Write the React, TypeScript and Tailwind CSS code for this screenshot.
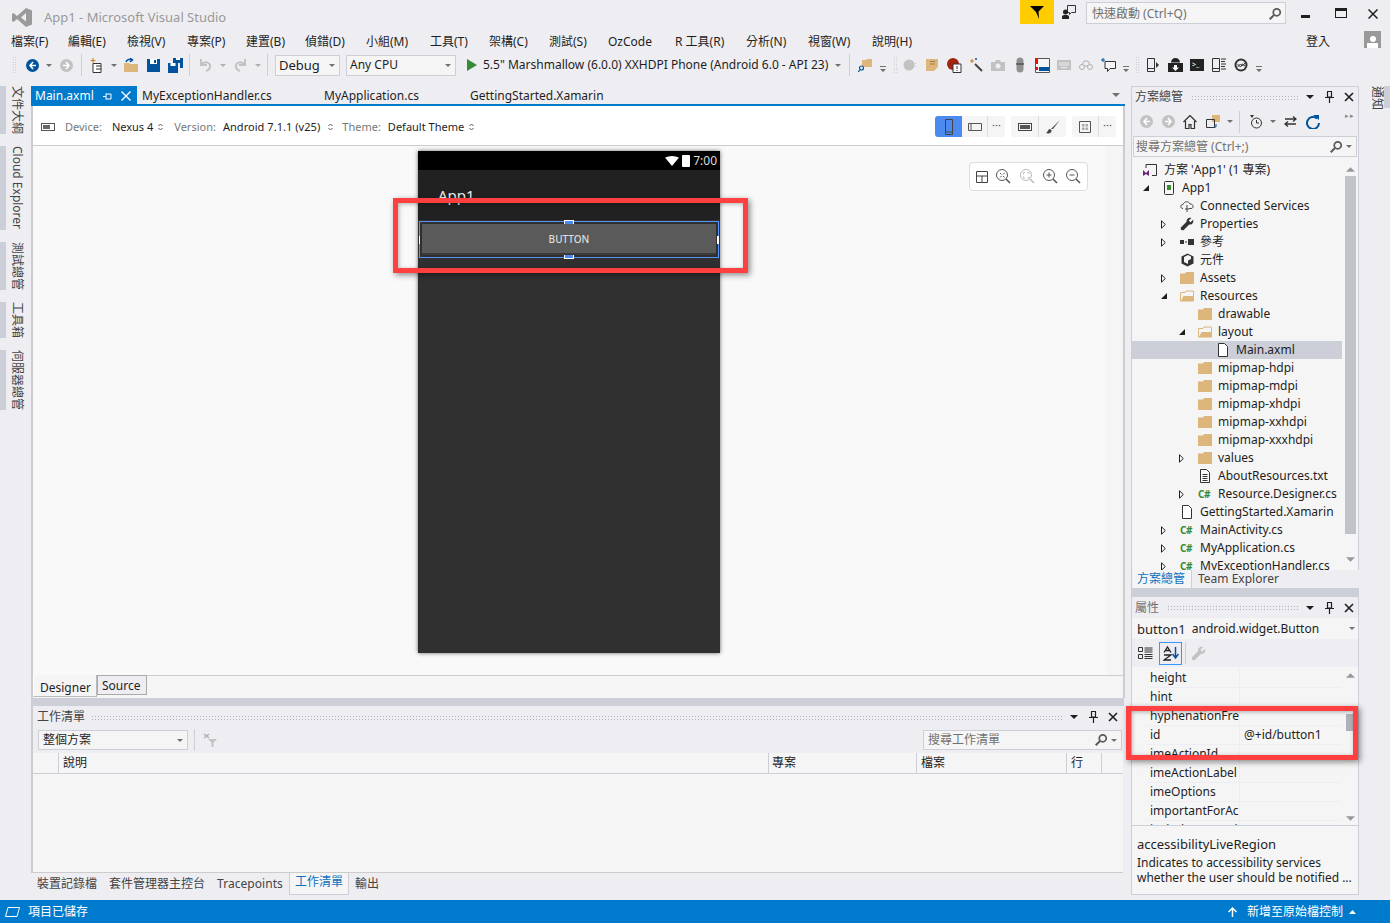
import React from "react";

type P = { c?: string; v?: string; children?: React.ReactNode };
const S = ({ c = "", v = "0 0 16 16", children }: P) => (
  <svg viewBox={v} className={"shrink-0 " + c} fill="none">{children}</svg>
);
const Caret = ({ c = "", f = "#717171" }: { c?: string; f?: string }) => (
  <S c={"w-[6px] h-[3px] " + c} v="0 0 6 3"><path d="M0 0h6L3 3z" fill={f} /></S>
);
const CaretBar = ({ c = "" }: { c?: string }) => (
  <S c={"w-[6px] h-[6px] mt-[8px] " + c} v="0 0 6 6"><path d="M0 0h6v1H0zM0 3h6L3 6z" fill="#717171" /></S>
);
const Grip = ({ c = "" }: { c?: string }) => (
  <div className={"w-[5px] h-[18px] bg-[radial-gradient(#b5b5be_0.6px,transparent_0.8px)] bg-[length:2.500px_2.500px] " + c} />
);
const Dots = ({ c = "" }: { c?: string }) => (
  <div className={"h-[5px] bg-[radial-gradient(#b0b0ba_0.7px,transparent_0.8px)] bg-[length:3px_3px] " + c} />
);
const Sep = ({ c = "" }: { c?: string }) => <div className={"w-px h-[22px] bg-[#ccced8] " + c} />;
const Circ = ({ c = "", f, dir }: { c?: string; f: string; dir: "l" | "r" }) => (
  <S c={"w-[13px] h-[13px] " + c} v="0 0 13 13">
    <circle cx="6.5" cy="6.5" r="6.5" fill={f} />
    <path d={dir === "l" ? "M7 3 4 6.5 7 10M4 6.5h6" : "M6 3l3 3.5L6 10M9 6.5H3"} stroke="#fff" strokeWidth="1.6" />
  </S>
);
const Mag = ({ c = "" }: { c?: string }) => (
  <S c={"w-[14px] h-[14px] " + c}>
    <circle cx="10" cy="6" r="4" stroke="#5a5a5a" strokeWidth="2" />
    <path d="M7 9 2 14" stroke="#5a5a5a" strokeWidth="2.4" />
  </S>
);
const Folder = ({ c = "" }: { c?: string }) => (
  <S c={"w-[14px] h-[12px] " + c} v="0 0 14 12"><path d="M0 1.5h5l1-1.5h8v12H0z" fill="#dcb67a" /></S>
);
const FolderOpen = ({ c = "" }: { c?: string }) => (
  <S c={"w-[14px] h-[12px] " + c} v="0 0 14 12">
    <path d="M.5 11V2.5h4.5l1-1.5h7.500v10z" fill="#f5f5f5" stroke="#dcb67a" />
    <path d="M1 11l2.500-5H14v5z" fill="#dcb67a" />
  </S>
);
const Tri = ({ open }: { open?: boolean }) =>
  open ? (
    <S c="w-[6px] h-[6px]" v="0 0 6 6"><path d="M6 0v6H0z" fill="#1e1e1e" /></S>
  ) : (
    <S c="w-[5px] h-[9px]" v="0 0 5 9"><path d="M.5.8v7.400L4.300 4.500z" fill="#fff" stroke="#1e1e1e" /></S>
  );
const Cs = () => <span className="text-[10px] leading-none font-bold text-[#388a34] w-[14px] tracking-[-0.5px]">C#</span>;
const Doc = ({ lines }: { lines?: boolean }) => (
  <S c="w-[12px] h-[14px]" v="0 0 12 14">
    <path d="M1.500.5h6l3 3v10h-9z" fill="#fff" stroke="#333" />
    {lines && <path d="M3.500 5.500h5M3.500 7.500h5M3.500 9.500h5M3.500 11.500h5" stroke="#333" />}
  </S>
);
const Wrench = ({ f = "#333", c = "w-[14px] h-[14px]" }: { f?: string; c?: string }) => (
  <S c={c}><path d="M15 3l-3 3-2-2 3-3c-3-1-6 1-5.500 4.500L1 12c-1 2 1 4 3 3l6.500-6.500C14 9 16 6 15 3z" fill={f} /></S>
);

type Row = { t: string; l: number; a?: "o" | "c"; i: React.ReactNode; sel?: boolean };
const pad: Record<number, string> = { 1: "pl-[11px]", 2: "pl-[29px]", 3: "pl-[47px]", 4: "pl-[65px]" };
const tree: Row[] = [
  { t: "App1", l: 1, a: "o", i: <S c="w-[12px] h-[14px]" v="0 0 12 14"><rect x="1.500" y=".5" width="9" height="13" rx="1" fill="#f5f5f5" stroke="#333" /><rect x="4" y="4" width="4" height="5" fill="#388a34" /></S> },
  { t: "Connected Services", l: 2, i: <S c="w-[14px] h-[12px]" v="0 0 14 12"><path d="M3 8.500C0 8.500 0 4.500 3 4.500 4 1 9 1 10 4c4 0 4 4.500 1 4.500H9M7 5v7M5 9h4" stroke="#444" /></S> },
  { t: "Properties", l: 2, a: "c", i: <Wrench /> },
  { t: "參考", l: 2, a: "c", i: <S c="w-[14px] h-[6px]" v="0 0 14 6"><path d="M0 1h4v4H0zM5 2.500h2v1H5zM8 0h6v6H8z" fill="#333" /></S> },
  { t: "元件", l: 2, i: <S c="w-[13px] h-[14px]" v="0 0 13 14"><path d="M6.500.5 12.500 3.500v7l-6 3-6-3v-7z" fill="#333" /><path d="M3 4l4-2 3 1.500V6L7 7.500V11L3 9z" fill="#f5f5f5" /></S> },
  { t: "Assets", l: 2, a: "c", i: <Folder /> },
  { t: "Resources", l: 2, a: "o", i: <FolderOpen /> },
  { t: "drawable", l: 3, i: <Folder /> },
  { t: "layout", l: 3, a: "o", i: <FolderOpen /> },
  { t: "Main.axml", l: 4, i: <Doc />, sel: true },
  { t: "mipmap-hdpi", l: 3, i: <Folder /> },
  { t: "mipmap-mdpi", l: 3, i: <Folder /> },
  { t: "mipmap-xhdpi", l: 3, i: <Folder /> },
  { t: "mipmap-xxhdpi", l: 3, i: <Folder /> },
  { t: "mipmap-xxxhdpi", l: 3, i: <Folder /> },
  { t: "values", l: 3, a: "c", i: <Folder /> },
  { t: "AboutResources.txt", l: 3, i: <Doc lines /> },
  { t: "Resource.Designer.cs", l: 3, a: "c", i: <Cs /> },
  { t: "GettingStarted.Xamarin", l: 2, i: <Doc /> },
  { t: "MainActivity.cs", l: 2, a: "c", i: <Cs /> },
  { t: "MyApplication.cs", l: 2, a: "c", i: <Cs /> },
  { t: "MyExceptionHandler.cs", l: 2, a: "c", i: <Cs /> },
];
const menu: [string, string][] = [
  ["檔案(F)", "w-[57px]"], ["編輯(E)", "w-[59px]"], ["檢視(V)", "w-[60px]"], ["專案(P)", "w-[59px]"], ["建置(B)", "w-[59px]"],
  ["偵錯(D)", "w-[61px]"], ["小組(M)", "w-[64px]"], ["工具(T)", "w-[59px]"], ["架構(C)", "w-[60px]"], ["測試(S)", "w-[59px]"],
  ["OzCode", "w-[67px]"], ["R 工具(R)", "w-[71px]"], ["分析(N)", "w-[62px]"], ["視窗(W)", "w-[64px]"], ["說明(H)", "w-[60px]"],
];
const props: [string, string][] = [["height", ""], ["hint", ""], ["hyphenationFre", ""], ["id", "@+id/button1"], ["imeActionId", ""], ["imeActionLabel", ""], ["imeOptions", ""], ["importantForAc", ""], ["includeFontPad", ""]];
const leftTabs: [string, string][] = [["文件大綱", "h-[48px]"], ["Cloud Explorer", "h-[84px]"], ["測試總管", "h-[48px]"], ["工具箱", "h-[36px]"], ["伺服器總管", "h-[60px]"]];

const PanelBtns = () => (
  <div className="flex items-center gap-[7px] ml-[6px]">
    <Caret c="w-[8px] h-[4px]" f="#1e1e1e" />
    <S c="w-[9px] h-[12px] ml-[4px]" v="0 0 9 12"><path d="M2 .5h5M2.500 1v5h4V1M0 6.500h9M4.500 7v5" stroke="#1e1e1e" strokeWidth="1.200" /></S>
    <S c="w-[10px] h-[10px] ml-[3px]" v="0 0 10 10"><path d="M1 1l8 8M9 1l-8 8" stroke="#1e1e1e" strokeWidth="1.600" /></S>
  </div>
);

export default function App() {
  return (
    <div className="relative w-[1390px] h-[923px] overflow-hidden flex flex-col bg-[#eeeef2] text-[12px] leading-[18px] text-[#1e1e1e] font-['Noto_Sans','Noto_Sans_CJK_TC',sans-serif]">
      {/* Title */}
      <div className="h-[27px] flex items-start shrink-0">
        <S c="w-[20px] h-[19px] ml-[12px] mt-[8px]" v="0 0 20 19"><path d="M14 0l6 2.500v14L14 19 5 11l-3.500 3L0 13V6l1.500-1L5 8zM14 5l-5 4.500 5 4z" fill="#9a9a9a" fillRule="evenodd" /></S>
        <span className="ml-[12px] mt-[8px] text-[13px] text-[#999]">App1 - Microsoft Visual Studio</span>
        <div className="ml-auto flex items-start">
          <div className="w-[34px] h-[24px] bg-[#ffcc00] flex items-center justify-center">
            <S c="w-[14px] h-[14px]" v="0 0 14 14"><path d="M0 1h14L8.500 6.500 9 14 6 7z" fill="#000" /></S>
          </div>
          <S c="w-[14px] h-[14px] ml-[8px] mt-[5px]" v="0 0 14 14"><path d="M5.500.5h8v7h-4l-2 2v-2h-2z" stroke="#333" /><circle cx="3.500" cy="7" r="2.500" fill="#222" /><path d="M0 14v-2.500c0-1 1-1.500 3.500-1.500s3.500.5 3.500 1.500V14z" fill="#222" /></S>
          <div className="ml-[10px] mt-[2px] w-[200px] h-[22px] bg-[#f5f5f5] border border-[#ccced8] flex items-center pl-[5px] pr-[3px] pt-[1px] text-[#717171]">
            <span>快速啟動 (Ctrl+Q)</span><Mag c="ml-auto" />
          </div>
          <div className="w-[9px] h-[3px] bg-[#1e1e1e] ml-[15px] mt-[15px]" />
          <div className="w-[12px] h-[10px] border border-[#1e1e1e] border-t-[3px] ml-[25px] mt-[8px]" />
          <S c="w-[10px] h-[10px] ml-[21px] mr-[12px] mt-[9px]" v="0 0 10 10"><path d="M.5.5l9 9M9.500.5l-9 9" stroke="#1e1e1e" strokeWidth="1.500" /></S>
        </div>
      </div>
      {/* Menu */}
      <div className="h-[25px] flex items-center pl-[11px] pt-[4px] shrink-0">
        {menu.map(([m, w]) => <span key={m} className={"whitespace-nowrap " + w}>{m}</span>)}
        <span className="ml-auto">登入</span>
        <div className="w-[17px] h-[17px] bg-[#999] ml-[34px] mr-[9px] -mt-[4px] flex flex-col items-center justify-end overflow-hidden">
          <div className="w-[6px] h-[6px] rounded-full bg-white" />
          <div className="w-[11px] h-[5px] bg-white mt-[1px]" />
        </div>
      </div>
      {/* Toolbar */}
      <div className="h-[26px] flex items-center shrink-0">
        <Grip c="ml-[12px] -mr-[1px]" />
        <Circ c="ml-[10px]" f="#00539c" dir="l" />
        <Caret c="ml-[7px]" />
        <Circ c="ml-[8px]" f="#c2c2c2" dir="r" />
        <Sep c="ml-[8px]" />
        <S c="w-[14px] h-[15px] ml-[8px]" v="0 0 14 15"><path d="M3 5.500h8v9H3z" fill="#fff" stroke="#333" /><path d="M6 8h5M6 11h5" stroke="#333" /><path d="M3 0v5M.5 2.500h5" stroke="#c27d1a" /></S>
        <Caret c="ml-[7px]" />
        <S c="w-[14px] h-[14px] ml-[7px]" v="0 0 14 14"><path d="M0 5h5l1 1h8v8H0z" fill="#dcb67a" /><path d="M2 4c1-3 4-3 6-2M6 0l2.500 2L6 4" stroke="#00539c" strokeWidth="1.500" /></S>
        <S c="w-[13px] h-[13px] ml-[9px]" v="0 0 13 13"><path d="M0 0h13v13H0z" fill="#00539c" /><path d="M3 0h7v5H3z" fill="#fff" /><path d="M7 1h2v3H7z" fill="#00539c" /></S>
        <S c="w-[15px] h-[15px] ml-[8px]" v="0 0 15 15"><path d="M5 0h10v10H12V5H5z" fill="#00539c" /><path d="M0 5h10v10H0z" fill="#00539c" /><path d="M2.500 5h5v3h-5zM8 0h4v2H8z" fill="#fff" /></S>
        <Sep c="ml-[6px]" />
        <S c="w-[14px] h-[14px] ml-[8px]" v="0 0 14 14"><path d="M3 1v6h6M3.500 6.500C7 2 13 5 12 9c-.5 2-2 3.500-4 4" stroke="#c2c2c2" strokeWidth="2" /></S>
        <Caret c="ml-[8px]" f="#b0b0b0" />
        <S c="w-[14px] h-[14px] ml-[8px]" v="0 0 14 14"><path d="M11 1v6H5M10.500 6.500C7 2 1 5 2 9c.5 2 2 3.500 4 4" stroke="#c2c2c2" strokeWidth="2" /></S>
        <Caret c="ml-[7px]" f="#b0b0b0" />
        <Sep c="ml-[6px]" />
        <div className="ml-[7px] w-[65px] h-[21px] bg-[#f5f5f5] border border-[#ccced8] flex items-center pl-[3px] pr-[4px] text-[13px]">Debug<Caret c="ml-auto" /></div>
        <div className="ml-[6px] w-[110px] h-[21px] bg-[#f5f5f5] border border-[#ccced8] flex items-center pl-[3px] pr-[4px]">Any CPU<Caret c="ml-auto" /></div>
        <S c="w-[10px] h-[12px] ml-[11px]" v="0 0 10 12"><path d="M0 0l10 6-10 6z" fill="#388a34" /></S>
        <span className="ml-[6px] w-[347px] whitespace-nowrap overflow-hidden">5.5&quot; Marshmallow (6.0.0) XXHDPI Phone (Android 6.0 - API 23)</span>
        <Caret c="ml-[5px]" />
        <Sep c="ml-[8px]" />
        <S c="w-[14px] h-[14px] ml-[8px]" v="0 0 14 14"><path d="M4 2h4l1-1h5v8H4z" fill="#dcb67a" /><circle cx="3.500" cy="10" r="2" stroke="#00539c" strokeWidth="1.200" /><path d="M2 12l-2 2" stroke="#00539c" strokeWidth="1.200" /></S>
        <CaretBar c="ml-[8px]" />
        <Grip c="ml-[7px] -mr-[1px]" />
        <S c="w-[14px] h-[12px] ml-[6px]" v="0 0 14 12"><circle cx="6" cy="6" r="5.500" fill="#c2c2c2" /><path d="M12.500 4v1M12.500 7v1" stroke="#c2c2c2" /></S>
        <S c="w-[14px] h-[14px] ml-[8px]" v="0 0 14 14"><path d="M1 1h12v8l-4 4H1z" fill="#dcb67a" /><path d="M5 3.500h5M5 6h5" stroke="#a37f45" /></S>
        <S c="w-[15px] h-[15px] ml-[8px]" v="0 0 15 15"><circle cx="6" cy="6" r="6" fill="#a1260d" /><path d="M6 6h8v8.500H6z" fill="#fff" stroke="#333" /><path d="M10 8v3M10 12v1" stroke="#333" /></S>
        <S c="w-[14px] h-[14px] ml-[7px]" v="0 0 14 14"><path d="M6 6l7 7" stroke="#444" strokeWidth="2" /><path d="M3 1v4M1 3h4" stroke="#c27d1a" /><path d="M7 0v2M6 1h2" stroke="#00539c" /></S>
        <S c="w-[14px] h-[11px] ml-[8px]" v="0 0 14 11"><path d="M0 2h4l1-2h4l1 2h4v9H0z" fill="#c2c2c2" /><circle cx="7" cy="6" r="2.500" fill="#eeeef2" /></S>
        <S c="w-[10px] h-[16px] ml-[10px]" v="0 0 10 16"><rect x="1.500" y=".5" width="7" height="15" rx="3.500" fill="#909090" /><path d="M1 7h8" stroke="#333" /></S>
        <S c="w-[15px] h-[15px] ml-[10px]" v="0 0 15 15"><path d="M.5.5h14v14H.500z" fill="#f5f5f5" stroke="#555" /><path d="M4 9h10v4H4z" fill="#00539c" /><path d="M0 0h3v6H0zM0 9h3v3H0z" fill="#e51400" /></S>
        <S c="w-[14px] h-[10px] ml-[7px]" v="0 0 14 10"><rect width="14" height="10" fill="#c2c2c2" /><path d="M2 3h10M2 5h10M4 7.500h6" stroke="#eee" /></S>
        <S c="w-[14px] h-[10px] ml-[8px]" v="0 0 14 10"><circle cx="3" cy="7" r="2.500" stroke="#b0b0b0" /><circle cx="11" cy="7" r="2.500" stroke="#b0b0b0" /><path d="M5 6h4M3 5l2-4h4l2 4" stroke="#b0b0b0" /></S>
        <S c="w-[15px] h-[14px] ml-[8px]" v="0 0 15 14"><path d="M4 3.500h10.500v7H9l-2.500 3v-3H4z" stroke="#333" fill="#f5f5f5" /><path d="M2 0v4M0 2h4" stroke="#00539c" /></S>
        <CaretBar c="ml-[7px]" />
        <Grip c="ml-[6px] -mr-[1px]" />
        <S c="w-[12px] h-[14px] ml-[8px]" v="0 0 12 14"><path d="M.5.5h7v13h-7zM.5 10.500h7" stroke="#333" /><path d="M9 4l3 3-3 3z" fill="#333" /></S>
        <S c="w-[15px] h-[14px] ml-[9px]" v="0 0 15 14"><path d="M0 5h15v9H0zM3 4.500a4.500 4.500 0 0 1 9 0z" fill="#222" /><path d="M6 7h3v2.500h2L7.500 13 4 9.500h2z" fill="#fff" /></S>
        <div className="w-[14px] h-[12px] ml-[7px] bg-[#222] text-white text-[7px] leading-[12px] pl-[2px]">&gt;_</div>
        <S c="w-[14px] h-[14px] ml-[8px]" v="0 0 14 14"><path d="M.5.5h7v13h-7zM.5 10.500h7" stroke="#333" /><path d="M9 1h5M9 3.500h4M9 6h5M9 8.500h4M9 11h5" stroke="#333" /></S>
        <S c="w-[14px] h-[14px] ml-[8px]" v="0 0 14 14"><circle cx="7" cy="7" r="6.500" fill="#333" /><circle cx="7" cy="7" r="4.500" fill="#eeeef2" /><path d="M3.500 9l3-3 2 2 2.500-3M3.500 6l3 3 2-3 2.500 2" stroke="#333" /></S>
        <CaretBar c="ml-[8px]" />
      </div>
      <div className="h-[8px] shrink-0" />
      {/* Main */}
      <div className="h-[814px] flex shrink-0">
        {/* Left strip */}
        <div className="w-[31px] shrink-0 flex flex-col gap-[12px]">
          {leftTabs.map(([t, h]) => (
            <div key={t} className={"flex " + h}>
              <div className="w-[6px] bg-[#ccced8] shrink-0" />
              <div className="pl-[5px] [writing-mode:vertical-rl] [text-orientation:sideways] leading-[13px] whitespace-nowrap text-[#444]">{t}</div>
            </div>
          ))}
        </div>
        {/* Center */}
        <div className="w-[1094px] shrink-0 flex flex-col">
          <div className="h-[18px] flex items-center shrink-0">
            <div className="w-[106px] h-[18px] bg-[#007acc] text-white flex items-center pl-[4px] pt-[2px]">
              Main.axml
              <S c="w-[9px] h-[7px] ml-[9px]" v="0 0 9 7"><path d="M0 3.500h3M3 .5v6M3 1h5v5H3" stroke="#fff" /></S>
              <S c="w-[10px] h-[10px] ml-[9px]" v="0 0 10 10"><path d="M.5.5l9 9M9.500.5l-9 9" stroke="#fff" strokeWidth="1.400" /></S>
            </div>
            <span className="ml-[5px] w-[182px] pt-[2px]">MyExceptionHandler.cs</span>
            <span className="w-[146px] pt-[2px]">MyApplication.cs</span>
            <span className="pt-[2px]">GettingStarted.Xamarin</span>
            <Caret c="ml-auto mr-[5px] w-[8px] h-[4px]" />
          </div>
          <div className="h-[2px] bg-[#007acc] shrink-0" />
          <div className="h-[592px] shrink-0 flex flex-col border-l-2 border-l-[#ccc] border-r-2 border-r-[#ccc] bg-[#f5f5f5]">
            {/* Designer toolbar */}
            <div className="h-[40px] shrink-0 bg-white border-b border-[#ccc] flex items-center text-[11px] pl-[8px] pt-[2px]">
              <S c="w-[14px] h-[8px]" v="0 0 14 8"><rect x=".5" y=".5" width="13" height="7" fill="#fff" stroke="#555" /><rect x="2" y="2" width="7" height="4" fill="#666" /></S>
              <span className="ml-[10px] text-[#777]">Device:</span>
              <span className="ml-[10px]">Nexus 4</span>
              <UpDown c="ml-[5px]" />
              <span className="ml-[11px] text-[#777]">Version:</span>
              <span className="ml-[7px] tracking-[0.05px]">Android 7.1.1 (v25)</span>
              <UpDown c="ml-[8px]" />
              <span className="ml-[9px] text-[#777]">Theme:</span>
              <span className="ml-[7px]">Default Theme</span>
              <UpDown c="ml-[5px]" />
              <div className="ml-auto mr-[7px] flex gap-[6px]">
                <div className="h-[21px] flex bg-[#f5f5f5] rounded-[3px]">
                  <div className="w-[27px] bg-[#4d8af0] rounded-l-[3px] flex items-center justify-center">
                    <S c="w-[8px] h-[16px]" v="0 0 8 16"><path d="M.5.5h7v15h-7zM.5 13h7" stroke="#444" /></S>
                  </div>
                  <div className="w-[26px] flex items-center justify-center border-r border-[#ddd]">
                    <S c="w-[14px] h-[8px]" v="0 0 14 8"><path d="M.5.5h13v7H.500zM3 .5v7" stroke="#555" /></S>
                  </div>
                  <div className="w-[17px] text-[#555] text-center leading-[18px]">···</div>
                </div>
                <div className="h-[21px] flex bg-[#f5f5f5] rounded-[3px]">
                  <div className="w-[28px] flex items-center justify-center border-r border-[#ddd]">
                    <div className="w-[14px] h-[8px] border border-[#444] p-[1px]"><div className="w-full h-full bg-[#555]" /></div>
                  </div>
                  <div className="w-[27px] flex items-center justify-center">
                    <S c="w-[14px] h-[14px]" v="0 0 14 14"><path d="M14 0 6 8l-1 0 1 1 1 0zM4 9c-2 0-2 3-4 4 3 1 6 0 5.500-3z" fill="#444" /></S>
                  </div>
                </div>
                <div className="h-[21px] flex bg-[#f5f5f5] rounded-[3px]">
                  <div className="w-[27px] flex items-center justify-center border-r border-[#ddd]">
                    <S c="w-[12px] h-[12px]" v="0 0 12 12"><path d="M.5.5h11v11H.500z" stroke="#555" /><path d="M3 3h2.500v2.500H3zM6.500 3H9v2.500H6.500zM3 6.500h2.500V9H3zM6.500 6.500H9V9H6.500z" fill="#aaa" /></S>
                  </div>
                  <div className="w-[17px] text-[#555] text-center leading-[18px]">···</div>
                </div>
              </div>
            </div>
            {/* Canvas */}
            <div className="relative h-[529px] shrink-0 bg-[#f9f9f9] flex justify-center pt-[5px] pr-[18px]">
              <div className="absolute top-0 right-0 bottom-0 w-[17px] bg-[#f5f5f5]" />
              <div className="relative w-[302px] h-[502px] bg-[#303030] shadow-[0_0_4px_rgba(0,0,0,0.6)] flex flex-col">
                <div className="h-[19px] bg-black flex items-center justify-end pr-[3px] gap-[3px] text-[12px] text-[#ddd]">
                  <S c="w-[14px] h-[10px]" v="0 0 14 10"><path d="M0 1.500Q7-1.500 14 1.500L7 10z" fill="#fff" /></S>
                  <div className="w-[8px] h-[12px] bg-white rounded-[1px]" />
                  <span>7:00</span>
                </div>
                <div className="h-[50px] bg-[#212121] pl-[20px] pt-[13px] text-[15px] leading-[24px] text-[#eee]">App1</div>
                <div className="mx-[1px] mt-[1px] h-[37px] border border-[#5a94f8] relative p-[2px]">
                  <div className="h-[31px] bg-[#5a5a5a] rounded-[1px] border-b-2 border-[#3a3a3a] flex items-center justify-center text-[10px] font-medium text-[#ddd]">BUTTON</div>
                  <div className="absolute -top-[2px] left-1/2 -ml-[5px] w-[10px] h-[4px] bg-[#4d8af0] border-t border-x border-white" />
                  <div className="absolute -bottom-[2px] left-1/2 -ml-[5px] w-[10px] h-[4px] bg-[#4d8af0] border-b border-x border-white" />
                  <div className="absolute top-1/2 -mt-[4px] -left-[1px] w-[1px] h-[8px] bg-white" />
                  <div className="absolute top-1/2 -mt-[4px] -right-[1px] w-[2px] h-[8px] bg-white" />
                </div>
              </div>
              {/* Zoom toolbar */}
              <div className="absolute top-[16px] right-[35px] w-[119px] h-[29px] bg-white border border-[#ddd] rounded-[4px] flex items-center justify-between px-[6px]">
                <S c="w-[12px] h-[12px]" v="0 0 12 12"><path d="M.5.5h11v11H.500zM.5 5h11M6 5v6.500" stroke="#444" /></S>
                <ZoomI s="#555" d="M4 4l1.500 1.500M8.500 4 7 5.500M4 8.500 5.500 7M8.500 8.500 7 7" />
                <ZoomI s="#bbb" d="M3.500 5V3.500H5M7.500 3.500H9V5M3.500 7.500V9H5M7.500 9H9V7.500" />
                <ZoomI s="#555" d="M3.500 6h5M6 3.500v5" />
                <ZoomI s="#555" d="M3.500 6h5" />
              </div>
            </div>
            {/* Designer tabs */}
            <div className="h-[22px] shrink-0 flex items-start bg-[#f5f5f5] border-t border-[#ccc]">
              <div className="w-[64px] h-[22px] -mt-px bg-[#f5f5f5] border border-t-0 border-[#bbb] border-l-white pl-[6px] pt-[4px] leading-[18px]">Designer</div>
              <div className="w-[50px] h-[20px] -mt-px bg-[#eeeef2] border border-[#aaa] pl-[4px] pt-[1px] leading-[18px]">Source</div>
            </div>
          </div>
          <div className="h-[8px] bg-[#ccced8] shrink-0 mr-[1px]" />
          {/* Task list */}
          <div className="h-[167px] shrink-0 flex flex-col border-l-2 border-[#ccc] border-b mr-[2px]">
            <div className="h-[21px] shrink-0 flex items-center pl-[4px] pr-[5px] pt-[1px] text-[#444]">
              <span className="whitespace-nowrap">工作清單</span>
              <Dots c="flex-1 ml-[6px]" />
              <PanelBtns />
            </div>
            <div className="h-[26px] shrink-0 flex items-center pl-[5px]">
              <div className="w-[150px] h-[20px] bg-[#f5f5f5] border border-[#ccced8] flex items-center pl-[4px] pr-[4px]">整個方案<Caret c="ml-auto" /></div>
              <Sep c="ml-[6px] h-[18px]" />
              <S c="w-[14px] h-[14px] ml-[8px]" v="0 0 14 14"><path d="M5 6h9l-3.500 3.500V14h-2V9.500z" fill="#c2c2c2" /><path d="M1 1l5 4M6 1 1 5" stroke="#b0b0b0" strokeWidth="1.500" /></S>
              <div className="ml-auto mr-[1px] w-[199px] h-[20px] bg-[#f5f5f5] border border-[#ccced8] flex items-center pl-[4px] pr-[4px] text-[#717171]">搜尋工作清單<Mag c="ml-auto" /><Caret c="ml-[3px]" /></div>
            </div>
            <div className="flex-1 bg-[#f5f5f5] flex flex-col">
              <div className="h-[21px] shrink-0 flex border-b border-[#ccced8] leading-[20px]">
                <div className="w-[26px] border-r border-[#ccced8]" />
                <div className="w-[710px] pl-[4px] border-r border-[#ccced8]">說明</div>
                <div className="w-[148px] pl-[3px] border-r border-[#ccced8]">專案</div>
                <div className="w-[150px] pl-[4px] border-r border-[#ccced8]">檔案</div>
                <div className="w-[35px] pl-[4px] border-r border-[#ccced8]">行</div>
              </div>
            </div>
          </div>
          {/* Bottom tabs */}
          <div className="h-[22px] flex items-center shrink-0 pl-[6px] text-[#444] whitespace-nowrap">
            <span>裝置記錄檔</span>
            <span className="ml-[12px]">套件管理器主控台</span>
            <span className="ml-[12px] tracking-[0.05px]">Tracepoints</span>
            <span className="ml-[6px] h-[22px] -mt-[1px] px-[5px] bg-[#f5f5f5] border border-t-0 border-[#ccced8] text-[#0e70c0]">工作清單</span>
            <span className="ml-[6px]">輸出</span>
          </div>
        </div>
        <div className="w-[6px] shrink-0" />
        {/* Right panels */}
        <div className="w-[228px] shrink-0 flex flex-col">
          <div className="h-[484px] shrink-0 border-x border-t border-[#ccced8] bg-[#f5f5f5] flex flex-col">
            <div className="h-[20px] shrink-0 bg-[#eeeef2] flex items-center pl-[3px] pr-[4px] text-[#444]">
              <span className="whitespace-nowrap">方案總管</span>
              <Dots c="flex-1 ml-[8px]" />
              <PanelBtns />
            </div>
            <div className="h-[29px] shrink-0 bg-[#eeeef2] flex items-center pl-[8px] relative">
              <Circ f="#c2c2c2" dir="l" />
              <Circ c="ml-[9px]" f="#c2c2c2" dir="r" />
              <S c="w-[14px] h-[14px] ml-[8px]" v="0 0 14 14"><path d="M.5 7 7 .5 13.500 7M2.500 6v7.500h3.500v-4h2v4h3.500V6" stroke="#333" strokeWidth="1.200" /></S>
              <S c="w-[14px] h-[14px] ml-[9px]" v="0 0 14 14"><path d="M6 0h8v7H6z" fill="#dcb67a" /><path d="M.5 4.500h8v8h-8z" stroke="#333" /><path d="M10 9v3H8" stroke="#00539c" /></S>
              <Caret c="ml-[7px]" />
              <Sep c="ml-[6px]" />
              <S c="w-[12px] h-[14px] ml-[10px]" v="0 0 12 14"><circle cx="6.500" cy="8" r="5" stroke="#333" /><path d="M6.500 5v3h2.500" stroke="#333" /><path d="M0 0h4L2 3z" fill="#333" /></S>
              <Caret c="ml-[8px]" />
              <S c="w-[13px] h-[11px] ml-[8px]" v="0 0 13 11"><path d="M1 3h11M9 .5 12 3 9 5.500M12 8H1M4 5.500 1 8l3 2.500" stroke="#333" strokeWidth="1.300" /></S>
              <S c="w-[14px] h-[14px] ml-[9px]" v="0 0 14 14"><path d="M11 3.500A6 6 0 1 0 13 8" stroke="#00539c" strokeWidth="2" /><path d="M7 0h6v5z" fill="#00539c" /></S>
              <span className="absolute right-[3px] top-0 text-[7px] text-[#888] tracking-[1px]">▸▸</span>
            </div>
            <div className="h-[21px] shrink-0 bg-[#f5f5f5] border border-[#ccced8] mx-px flex items-center pl-[2px] pr-[4px] text-[#717171]">
              搜尋方案總管 (Ctrl+;)<Mag c="ml-auto" /><Caret c="ml-[3px]" />
            </div>
            <div className="h-[4px] shrink-0" />
            <div className="flex-1 relative overflow-hidden">
              <div className="h-[18px] flex items-center pl-[11px]">
                <S c="w-[14px] h-[13px]" v="0 0 14 13"><path d="M3 4V.5h10.500v11H9" stroke="#333" /><path d="M0 6l3 3 3-3v6l-3-2-3 2z" fill="#68217a" /></S>
                <span className="ml-[7px]">方案 'App1' (1 專案)</span>
              </div>
              {tree.map((r) => (
                <div key={r.t} className={"h-[18px] w-[210px] flex items-center " + pad[r.l] + (r.sel ? " bg-[#ccced8]" : "")}>
                  <div className="w-[18px] flex items-center shrink-0">{r.a === "o" ? <Tri open /> : r.a === "c" ? <Tri /> : null}</div>
                  <div className="w-[16px] flex items-center justify-center shrink-0">{r.i}</div>
                  <span className="ml-[5px] whitespace-nowrap">{r.t}</span>
                </div>
              ))}
              <div className="absolute top-0 bottom-0 right-[1px] w-[13px] flex flex-col items-center pt-[6px] pb-[8px]">
                <Caret c="rotate-180 w-[9px] h-[5px]" f="#999" />
                <div className="w-[11px] h-[358px] bg-[#c2c3c9] mt-[4px]" />
                <Caret c="mt-auto w-[9px] h-[5px]" f="#999" />
              </div>
            </div>
          </div>
          <div className="h-[18px] shrink-0 flex items-center pl-[1px] border-l border-[#ccced8]">
            <span className="w-[59px] h-[18px] pl-[4px] bg-[#f5f5f5] text-[#0e70c0] border-r border-[#ccced8]">方案總管</span>
            <span className="ml-[6px] text-[#444]">Team Explorer</span>
          </div>
          <div className="h-[9px] shrink-0 bg-[#ccced8]" />
          <div className="h-[298px] shrink-0 border-x border-b border-[#ccced8] flex flex-col">
            <div className="h-[21px] shrink-0 flex items-center pl-[3px] pr-[4px] text-[#717171]">
              <span className="whitespace-nowrap">屬性</span>
              <Dots c="flex-1 ml-[8px]" />
              <PanelBtns />
            </div>
            <div className="h-[21px] shrink-0 bg-[#f5f5f5] flex items-center pl-[5px] pr-[3px]">
              <span className="text-[13px]">button1</span>
              <span className="ml-[6px]">android.widget.Button</span>
              <Caret c="ml-auto" />
            </div>
            <div className="h-[28px] shrink-0 flex items-center pl-[6px]">
              <S c="w-[15px] h-[14px]" v="0 0 15 14"><path d="M.5 1.500h4v4h-4zM.5 8.500h4v4h-4z" stroke="#333" /><path d="M6.500 2h8M6.500 4h8M6.500 6h8M6.500 8.500h8M6.500 10.500h8M6.500 12.500h8" stroke="#333" /></S>
              <div className="ml-[6px] w-[23px] h-[23px] border border-[#3399ff] flex items-center justify-center">
                <S c="w-[9px] h-[15px]" v="0 0 9 15"><path d="M1 6.500 4.500 1 8 6.500M2.500 4.500h4M1 9h7L1 14h7" stroke="#222" strokeWidth="1.300" /></S>
                <S c="w-[7px] h-[12px]" v="0 0 7 12"><path d="M3.500 0v10M.5 7l3 4 3-4" stroke="#00539c" strokeWidth="1.500" /></S>
              </div>
              <Sep c="ml-[3px]" />
              <Wrench f="#c2c2c2" c="w-[15px] h-[15px] ml-[5px]" />
            </div>
            <div className="h-[158px] shrink-0 bg-[#f5f5f5] relative overflow-hidden pt-[2px]">
              {props.map(([k, v]) => (
                <div key={k} className="h-[19px] ml-[15px] mr-[17px] flex border-b border-[#eeeef2]">
                  <div className="w-[93px] shrink-0 pl-[3px] overflow-hidden whitespace-nowrap border-r border-[#eeeef2] leading-[18px]">{k}</div>
                  <div className="pl-[4px] leading-[18px]">{v}</div>
                </div>
              ))}
              <div className="absolute top-0 bottom-0 right-[1px] w-[13px] flex flex-col items-center pt-[6px] pb-[4px]">
                <Caret c="rotate-180 w-[9px] h-[5px]" f="#999" />
                <div className="w-[10px] h-[17px] bg-[#b0b1b8] mt-[36px]" />
                <Caret c="mt-auto w-[9px] h-[5px]" f="#999" />
              </div>
            </div>
            <div className="flex-1 bg-[#f5f5f5] border-t border-[#ccced8] pl-[5px] pt-[9px]">
              <div className="text-[13px] leading-[18px]">accessibilityLiveRegion</div>
              <div className="leading-[15px] mt-[2px] whitespace-nowrap">Indicates to accessibility services</div>
              <div className="leading-[15px] whitespace-nowrap">whether the user should be notified ...</div>
            </div>
          </div>
        </div>
        {/* Right strip */}
        <div className="w-[31px] shrink-0 flex">
          <div className="w-[25px] pl-[8px] [writing-mode:vertical-rl] [text-orientation:sideways] leading-[13px] h-[24px] text-[#444]">通知</div>
          <div className="w-[6px] h-[22px] bg-[#ccced8]" />
        </div>
      </div>
      {/* Status */}
      <div className="h-[23px] bg-[#007acc] text-white flex items-center shrink-0 pl-[5px] pt-[1px]">
        <S c="w-[15px] h-[10px]" v="0 0 15 10"><path d="M3 .5h11.500L12 9.500H.5z" stroke="#fff" /></S>
        <span className="ml-[8px]">項目已儲存</span>
        <S c="w-[9px] h-[10px] ml-auto" v="0 0 9 10"><path d="M4.500 10V1M.5 5l4-4 4 4" stroke="#fff" strokeWidth="1.500" /></S>
        <span className="ml-[10px]">新增至原始檔控制</span>
        <S c="w-[7px] h-[4px] ml-[6px] mr-[34px]" v="0 0 7 4"><path d="M0 4h7L3.500 0z" fill="#fff" /></S>
      </div>
      {/* Red highlights */}
      <div className="absolute left-[393px] top-[198px] w-[355px] h-[75px] border-[5px] border-[#ff4040] shadow-[2px_2px_6px_rgba(0,0,0,0.45),inset_1px_1px_4px_rgba(0,0,0,0.3)]" />
      <div className="absolute left-[1126px] top-[706px] w-[232px] h-[54px] border-[5px] border-[#ff4040] shadow-[2px_2px_6px_rgba(0,0,0,0.45),inset_1px_1px_4px_rgba(0,0,0,0.3)]" />
    </div>
  );
}

function UpDown({ c = "" }: { c?: string }) {
  return (
    <S c={"w-[5px] h-[8px] " + c} v="0 0 5 8"><path d="M.5 3 2.500 1l2 2M.5 5l2 2 2-2" stroke="#555" /></S>
  );
}
function ZoomI({ s, d }: { s: string; d: string }) {
  return (
    <S c="w-[15px] h-[15px]" v="0 0 15 15">
      <circle cx="6" cy="6" r="5.500" stroke={s} />
      <path d={d} stroke={s} />
      <path d="M10 10l4 4" stroke={s} strokeWidth="1.600" />
    </S>
  );
}
